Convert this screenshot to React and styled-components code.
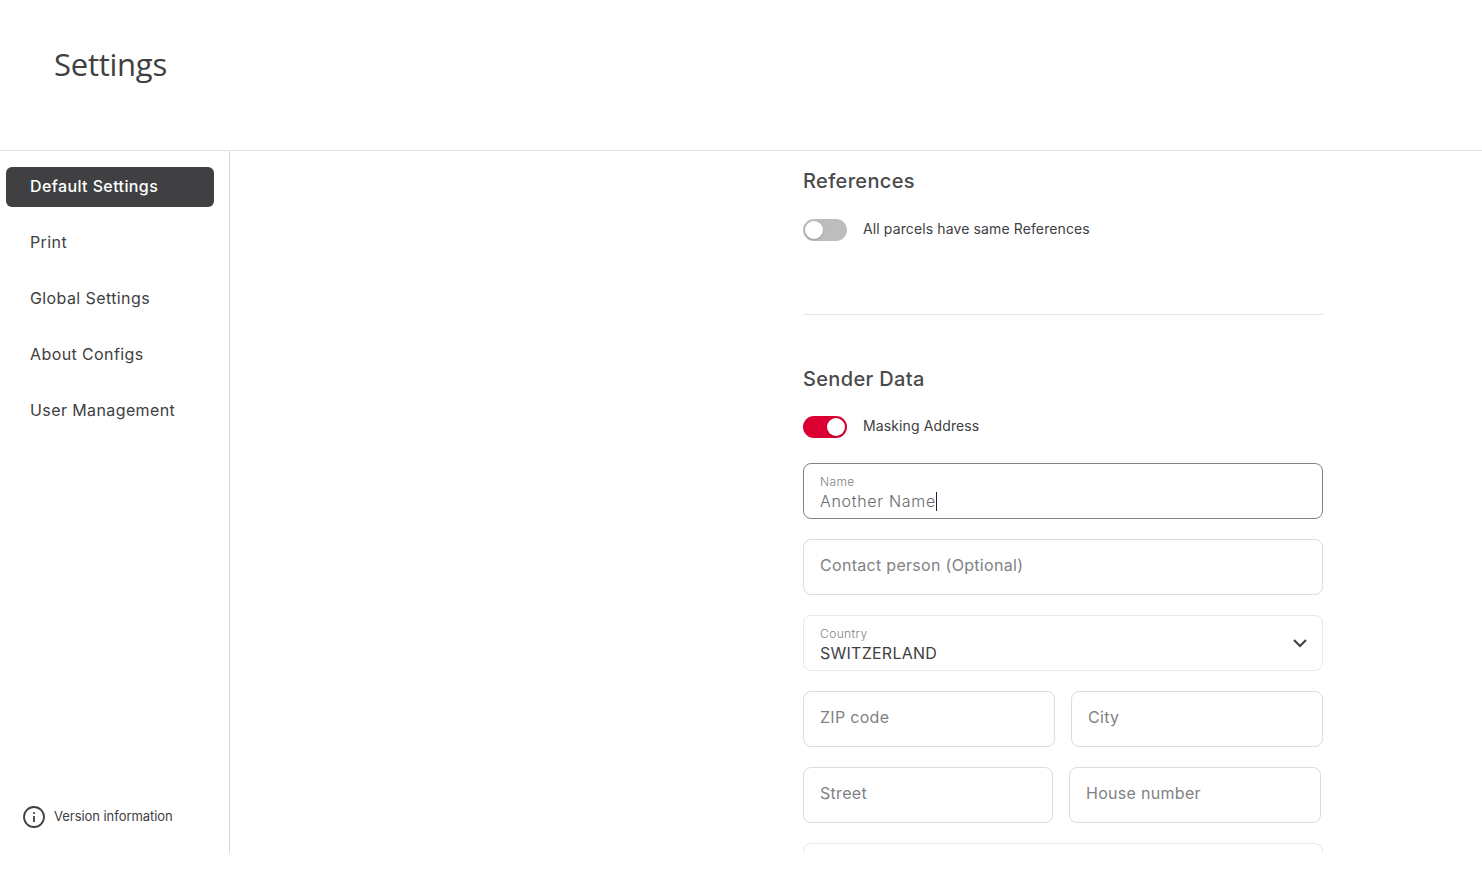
import React from "react";
import styled, { createGlobalStyle } from "styled-components";

const Global = createGlobalStyle`
  html, body { margin: 0; padding: 0; background: #fff; }
  body { font-family: Inter, "Liberation Sans", sans-serif; color: #404042; overflow: hidden; }
  * { box-sizing: border-box; }
`;
const Page = styled.div`
  height: 853px;
  display: flex;
  flex-direction: column;
  overflow: hidden;
`;
const Header = styled.header`
  height: 151px;
  flex: none;
  border-bottom: 1px solid #e3e3e3;
  padding: 42px 0 0 54px;
`;
const Title = styled.h1`
  margin: 0;
  font: 400 31px/44px "Open Sans", sans-serif;
  letter-spacing: -0.25px;
  color: #404042;
`;
const Body = styled.div`
  flex: 1;
  min-height: 0;
  display: flex;
`;
const Sidebar = styled.nav`
  width: 230px;
  flex: none;
  border-right: 1px solid #d9d9d9;
  padding: 16px 15px 0 6px;
  display: flex;
  flex-direction: column;
  gap: 16px;
`;
const NavItem = styled.div`
  height: 40px;
  display: flex;
  align-items: center;
  padding: 0 0 2px 24px;
  border-radius: 6px;
  font-size: 16px;
  font-weight: ${(p) => (p.$active ? 500 : 400)};
  letter-spacing: 0.4px;
  color: ${(p) => (p.$active ? "#fff" : "#404042")};
  background: ${(p) => (p.$active ? "#404042" : "transparent")};
`;
const Version = styled.div`
  margin-top: auto;
  margin-bottom: 25px;
  margin-left: 17px;
  display: flex;
  align-items: center;
  gap: 9px;
  font-size: 13px;
  letter-spacing: -0.05px;
  color: #404042;
`;
const VersionLabel = styled.span`
  position: relative;
  top: -1px;
`;
const Main = styled.main`
  flex: 1;
  min-width: 0;
  overflow: hidden;
  padding: 18px 0 0 573px;
`;
const Column = styled.div`
  width: 520px;
`;
const SectionTitle = styled.h2`
  margin: 0;
  font-size: 20px;
  line-height: 24px;
  font-weight: 500;
  letter-spacing: 0.35px;
  color: #4a4a4c;
`;
const ToggleRow = styled.div`
  display: flex;
  align-items: center;
  gap: 16px;
  font-size: 14px;
  letter-spacing: 0.12px;
  color: #404042;
  margin-top: ${(p) => p.$top}px;
`;
const ToggleText = styled.span`
  position: relative;
  top: -2px;
`;
const Track = styled.span`
  position: relative;
  display: block;
  width: 44px;
  height: 22px;
  border-radius: 11px;
  background: ${(p) => (p.$on ? "#dc0032" : "#bdbdbd")};
`;
const Knob = styled.span`
  position: absolute;
  top: 2px;
  left: ${(p) => (p.$on ? "24px" : "2px")};
  width: 18px;
  height: 18px;
  border-radius: 50%;
  background: #fff;
  box-shadow: 0 1px 2px rgba(0, 0, 0, 0.2);
`;
const Divider = styled.hr`
  margin: 73px 0 52px;
  border: 0;
  border-top: 1px solid #e6e6e6;
`;
const Fields = styled.div`
  margin-top: 25px;
  display: flex;
  flex-direction: column;
  gap: 20px;
`;
const Row = styled.div`
  display: grid;
  grid-template-columns: ${(p) => p.$columns};
  gap: 16px;
`;
const Field = styled.div`
  position: relative;
  height: 56px;
  padding: ${(p) => (p.$filled ? "11px 16px 0" : "0 16px")};
  display: flex;
  flex-direction: column;
  justify-content: ${(p) => (p.$filled ? "flex-start" : "center")};
  border: 1px solid ${(p) => (p.$focused ? "#808285" : p.$soft ? "#e8e8e8" : "#dcdcdc")};
  border-radius: 8px;
  background: #fff;
`;
const FloatLabel = styled.span`
  font-size: 12px;
  line-height: 14px;
  font-weight: 300;
  letter-spacing: 0.4px;
  color: #808285;
  margin-bottom: 2px;
`;
const Value = styled.span`
  font-size: 16px;
  line-height: 20px;
  font-weight: ${(p) => (p.$light ? 300 : 400)};
  letter-spacing: ${(p) => (p.$light ? "0.7px" : "0.25px")};
  color: ${(p) => (p.$light ? "#6a6a6c" : "#404042")};
`;
const Caret = styled.span`
  display: inline-block;
  width: 1px;
  height: 19px;
  vertical-align: -4px;
  background: #222;
`;
const Placeholder = styled.span`
  font-size: 16px;
  line-height: 20px;
  letter-spacing: 0.3px;
  color: #808285;
  margin-top: -5px;
`;
const Chevron = styled.svg`
  position: absolute;
  right: 14px;
  top: 19px;
`;

export default function App() {
  return (
    <Page>
      <Global />
      <Header><Title>Settings</Title></Header>
      <Body>
        <Sidebar>
          <NavItem $active>Default Settings</NavItem>
          <NavItem>Print</NavItem>
          <NavItem>Global Settings</NavItem>
          <NavItem>About Configs</NavItem>
          <NavItem>User Management</NavItem>
          <Version>
            <svg width="22" height="22" viewBox="0 0 22 22" fill="none" stroke="#404042">
              <circle cx="11" cy="11" r="10" strokeWidth="1.8" />
              <path d="M11 10v6" strokeWidth="1.8" />
              <circle cx="11" cy="7" r="1.1" fill="#404042" stroke="none" />
            </svg>
            <VersionLabel>Version information</VersionLabel>
          </Version>
        </Sidebar>
        <Main>
          <Column>
            <SectionTitle>References</SectionTitle>
            <ToggleRow $top={26}>
              <Track><Knob /></Track>
              <ToggleText>All parcels have same References</ToggleText>
            </ToggleRow>
            <Divider />
            <SectionTitle>Sender Data</SectionTitle>
            <ToggleRow $top={25}>
              <Track $on><Knob $on /></Track>
              <ToggleText>Masking Address</ToggleText>
            </ToggleRow>
            <Fields>
              <Field $focused $filled>
                <FloatLabel>Name</FloatLabel>
                <Value $light>Another Name<Caret /></Value>
              </Field>
              <Field><Placeholder>Contact person (Optional)</Placeholder></Field>
              <Field $filled $soft>
                <FloatLabel>Country</FloatLabel>
                <Value>SWITZERLAND</Value>
                <Chevron width="16" height="16" viewBox="0 0 16 16" fill="none" stroke="#404042" strokeWidth="2">
                  <path d="M2 5l6 6 6-6" />
                </Chevron>
              </Field>
              <Row $columns="252px 252px">
                <Field><Placeholder>ZIP code</Placeholder></Field>
                <Field><Placeholder>City</Placeholder></Field>
              </Row>
              <Row $columns="250px 252px">
                <Field><Placeholder>Street</Placeholder></Field>
                <Field><Placeholder>House number</Placeholder></Field>
              </Row>
              <Field $soft />
            </Fields>
          </Column>
        </Main>
      </Body>
    </Page>
  );
}
